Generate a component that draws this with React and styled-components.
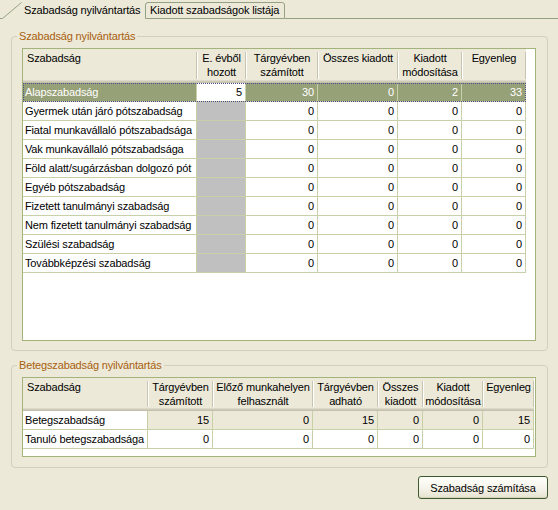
import styled, { createGlobalStyle } from 'styled-components';

const GlobalStyle = createGlobalStyle`
  body {
    margin: 0;
    background: #ece9d8;
  }
`;

//styles
const Window = styled.div`
  width: 558px;
  height: 510px;
  overflow: hidden;
  background: #ece9d8;
  font-family: "Liberation Sans", Arial, sans-serif;
  font-size: 11px;
  letter-spacing: -0.15px;
  color: #000;
  display: flex;
  flex-direction: column;
`;

const TabStrip = styled.div`
  display: flex;
  align-items: flex-end;
  height: 19px;
`;

const ActiveTab = styled.div`
  position: relative;
  width: 145px;
  height: 17px;
  box-sizing: border-box;
  padding-left: 24px;
  line-height: 16px;
  white-space: nowrap;

  svg {
    position: absolute;
    left: 0;
    top: 0;
  }
`;

const Tab = styled.div`
  width: 140px;
  height: 17px;
  box-sizing: border-box;
  border: 1px solid #94a283;
  border-radius: 3px 3px 0 0;
  padding-left: 4px;
  line-height: 15px;
  white-space: nowrap;
`;

const TabLine = styled.div`
  flex: 1;
  height: 1px;
  background: #94a283;
`;

const Body = styled.div`
  display: flex;
  flex-direction: column;
  padding: 0 10px 0 11px;
`;

const GroupBox = styled.fieldset`
  margin: ${p => p.$top}px 0 0 0;
  padding: 5px 11px ${p => p.$bottom}px 10px;
  border: 1px solid #d0d0bf;
  border-radius: 4px;
  min-width: 0;

  legend {
    margin-left: -5px;
    padding: 0 2px;
    line-height: 13px;
    color: #a8600f;
  }
`;

const Grid = styled.div`
  box-sizing: border-box;
  height: ${p => p.$height}px;
  border: 1px solid #a2b37c;
  background: #fff;
`;

const Row = styled.div`
  display: grid;
  grid-template-columns: ${p => p.$cols};
  width: max-content;
  background: ${p => (p.$selected ? '#97a178' : 'transparent')};
  color: ${p => (p.$selected ? '#fff' : '#000')};
  outline: ${p => (p.$selected ? '1px dotted #4b4b8c' : 'none')};
  outline-offset: -1px;
`;

const HeaderRow = styled(Row)`
  background: #ece9d8;
  height: ${p => p.$h}px;
  box-shadow: inset 0 -1px #c4c0ad, inset 0 -2px #cfcbb9, inset 0 -3px #dcd9c8;
`;

const HeaderCell = styled.div`
  position: relative;
  padding: 2px 2px 0 ${p => (p.$left ? 4 : 2)}px;
  line-height: 14px;
  text-align: ${p => (p.$left ? 'left' : 'center')};
  white-space: pre-line;

  &::after {
    content: '';
    position: absolute;
    right: 0;
    top: 3px;
    bottom: 4px;
    width: 1px;
    background: #c7c5b2;
    box-shadow: 1px 0 #fff;
  }
`;

const tones = {
  gray: '#c0c0c0',
  white: '#fff',
  beige: '#ece9d8',
  none: 'transparent'
};

const Cell = styled.div`
  box-sizing: border-box;
  height: 19px;
  line-height: 18px;
  border-right: 1px solid #c8d0a8;
  border-bottom: 1px solid #c8d0a8;
  padding: 0 ${p => (p.$num ? 3 : 2)}px 0 2px;
  text-align: ${p => (p.$num ? 'right' : 'left')};
  white-space: nowrap;
  overflow: hidden;
  background: ${p => tones[p.$tone || 'none']};
  color: ${p => (p.$tone && p.$tone !== 'none' ? '#000' : 'inherit')};
`;

const Footer = styled.div`
  display: flex;
  justify-content: flex-end;
  padding-top: 8px;
`;

const Button = styled.button`
  width: 130px;
  height: 23px;
  border: 1px solid #3f5a2d;
  border-radius: 3px;
  background: linear-gradient(#fffffb, #f5f3ea 55%, #e6e2d0);
  box-shadow: inset 0 -1px #d8d3bd;
  font-family: inherit;
  font-size: 11px;
  letter-spacing: inherit;
  color: #000;
  padding: 0;
`;

//data
const leaveCols = '174px 49px 72px 80px 64px 64px';
const leaveHead = ['Szabadság', 'E. évből\nhozott', 'Tárgyévben\nszámított', 'Összes kiadott', 'Kiadott\nmódosítása', 'Egyenleg'];
const leaveRows = [
  'Gyermek után járó pótszabadság',
  'Fiatal munkavállaló pótszabadsága',
  'Vak munkavállaló pótszabadsága',
  'Föld alatt/sugárzásban dolgozó pót',
  'Egyéb pótszabadság',
  'Fizetett tanulmányi szabadság',
  'Nem fizetett tanulmányi szabadság',
  'Szülési szabadság',
  'Továbbképzési szabadság'
];

const sickCols = '125px 65px 100px 65px 45px 60px 51px';
const sickHead = ['Szabadság', 'Tárgyévben\nszámított', 'Előző munkahelyen\nfelhasznált', 'Tárgyévben\nadható', 'Összes\nkiadott', 'Kiadott\nmódosítása', 'Egyenleg'];
const sickRows = [
  { name: 'Betegszabadság', values: [15, 0, 15, 0, 0, 15], tone: 'beige' },
  { name: 'Tanuló betegszabadsága', values: [0, 0, 0, 0, 0, 0], tone: 'white' }
];

//component
export default function App() {
  return (
    <Window>
      <GlobalStyle />
      <TabStrip>
        <ActiveTab>
          <svg width="24" height="17" viewBox="0 0 24 17">
            <path d="M0 16.5 H2.5 L21.5 0.5" fill="none" stroke="#94a283" strokeWidth="1" />
          </svg>
          Szabadság nyilvántartás
        </ActiveTab>
        <Tab>Kiadott szabadságok listája</Tab>
        <TabLine />
      </TabStrip>

      <Body>
        <GroupBox $top={11} $bottom={9}>
          <legend>Szabadság nyilvántartás</legend>
          <Grid $height={293}>
            <HeaderRow $cols={leaveCols} $h={34}>
              {leaveHead.map((h, i) => (
                <HeaderCell key={h} $left={i === 0}>{h}</HeaderCell>
              ))}
            </HeaderRow>
            <Row $cols={leaveCols} $selected>
              <Cell>Alapszabadság</Cell>
              <Cell $num $tone="white">5</Cell>
              <Cell $num>30</Cell>
              <Cell $num>0</Cell>
              <Cell $num>2</Cell>
              <Cell $num>33</Cell>
            </Row>
            {leaveRows.map(name => (
              <Row $cols={leaveCols} key={name}>
                <Cell $tone="white">{name}</Cell>
                <Cell $tone="gray" />
                <Cell $num $tone="white">0</Cell>
                <Cell $num $tone="white">0</Cell>
                <Cell $num $tone="white">0</Cell>
                <Cell $num $tone="white">0</Cell>
              </Row>
            ))}
          </Grid>
        </GroupBox>

        <GroupBox $top={8} $bottom={10}>
          <legend>Betegszabadság nyilvántartás</legend>
          <Grid $height={80}>
            <HeaderRow $cols={sickCols} $h={33}>
              {sickHead.map((h, i) => (
                <HeaderCell key={h} $left={i === 0}>{h}</HeaderCell>
              ))}
            </HeaderRow>
            {sickRows.map(r => (
              <Row $cols={sickCols} key={r.name}>
                <Cell $tone="white">{r.name}</Cell>
                {r.values.map((v, i) => (
                  <Cell $num $tone={r.tone} key={i}>{v}</Cell>
                ))}
              </Row>
            ))}
          </Grid>
        </GroupBox>

        <Footer>
          <Button>Szabadság számítása</Button>
        </Footer>
      </Body>
    </Window>
  );
}
